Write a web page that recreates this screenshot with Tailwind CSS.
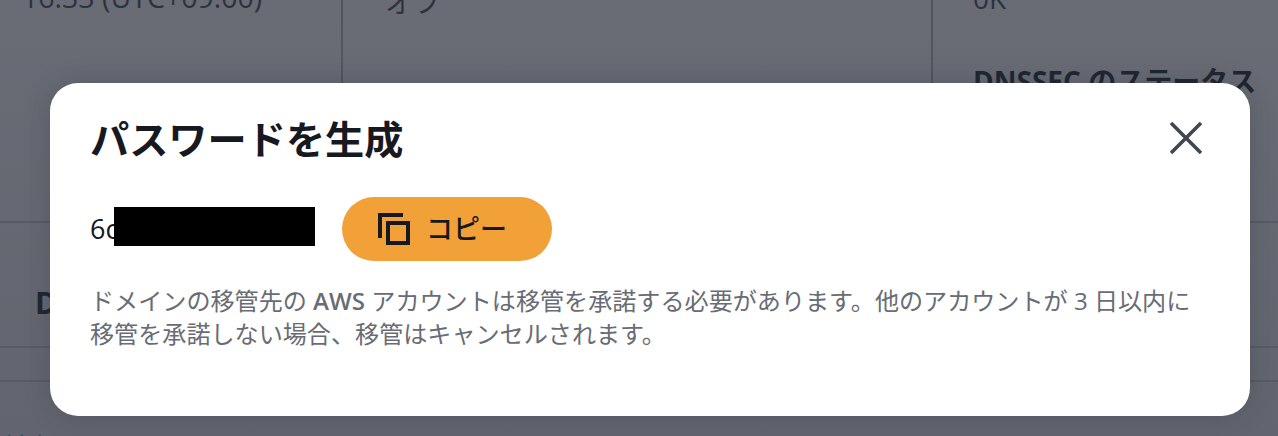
<!DOCTYPE html>
<html lang="ja">
<head>
  <meta charset="UTF-8">
  <title>パスワードを生成</title>
  <script src="https://cdn.jsdelivr.net/npm/@tailwindcss/browser@4"></script>
</head>
<body class="bg-[#686b74] overflow-hidden font-['Open_Sans','Noto_Sans_CJK_JP',sans-serif]">
  <div class="relative w-[1278px] h-[436px] overflow-hidden bg-gradient-to-b from-[#696c75] to-[#62656f]">
    <!-- page behind the dialog -->
    <div class="h-[241px] grid grid-cols-[341px_590px_347px] -mt-[20px] pt-[20px] text-[#1f2630]">
      <div class="pl-[22px] -mt-[21px] text-[28.5px] leading-[36px] whitespace-nowrap text-[#2d333c]">16:33 (UTC+09:00)</div>
      <div class="pl-[42px] -mt-[16px] border-l-2 border-[#52555f] text-[28px] leading-[36px] text-[#2d333c]">オフ</div>
      <div class="pl-[40px] -mt-[20px] border-l-2 border-[#52555f] text-[28px]">
        <div class="leading-[36px] text-[#2d333c]">0K</div>
        <div class="mt-[47px] font-bold leading-[36px] whitespace-nowrap text-[28px]">DNSSEC のステータス</div>
      </div>
    </div>
    <div class="h-[125px] border-t-2 border-[#585b64] pl-[35px] pt-[62px] text-[30px] font-bold leading-[36px] text-[#1f2630]">D</div>
    <div class="h-[34px] border-t-2 border-[#585b64]"></div>
    <div class="h-[56px] border-t-2 border-[#585b64] pl-[4px] pt-[48px] text-[28px] leading-[36px] text-[#1d4f86]">情報</div>

    <!-- dialog -->
    <div class="absolute left-[50px] top-[83px] w-[1200px] h-[333px] rounded-[28px] bg-white px-[40px] pt-[29px] shadow-[0_0_24px_rgba(40,44,52,0.25)]">
      <div class="flex items-start justify-between">
        <h1 class="text-[39.2px] leading-[50px] font-bold text-[#16191f] whitespace-nowrap font-['Noto_Sans_CJK_JP',sans-serif]">パスワードを生成</h1>
        <button class="mt-[10px] mr-[8px]">
          <svg class="w-[32px] h-[32px] block" viewBox="0 0 32 32" fill="none" stroke="#414750" stroke-width="3.6">
            <path d="M1 1 L31 31 M31 1 L1 31" />
          </svg>
        </button>
      </div>
      <div class="mt-[35px] flex items-center">
        <div class="relative w-[225px] text-[27px] leading-[36px] text-[#16191f]">6c
          <div class="absolute left-[24px] top-[-4px] w-[201px] h-[39px] bg-black"></div>
        </div>
        <button class="ml-[27px] w-[210px] h-[64px] rounded-full bg-[#f2a038] flex items-center pl-[36px] text-[#16191f]">
          <svg class="w-[32px] h-[32px] shrink-0" viewBox="0 0 32 32" fill="none" stroke="#16191f" stroke-width="4">
            <path d="M2 25 V2 H25" />
            <rect x="10" y="10" width="20" height="20" />
          </svg>
          <span class="ml-[16px] text-[27px] font-medium leading-[36px] -mt-[2px] font-['Noto_Sans_CJK_JP',sans-serif]">コピー</span>
        </button>
      </div>
      <p class="mt-[23px] text-[24.1px] leading-[33px] text-[#686c75] whitespace-nowrap">ドメインの移管先の <span class="font-semibold">AWS</span> アカウントは移管を承諾する必要があります。他のアカウントが 3 日以内に<br>移管を承諾しない場合、移管はキャンセルされます。</p>
    </div>
  </div>
</body>
</html>
